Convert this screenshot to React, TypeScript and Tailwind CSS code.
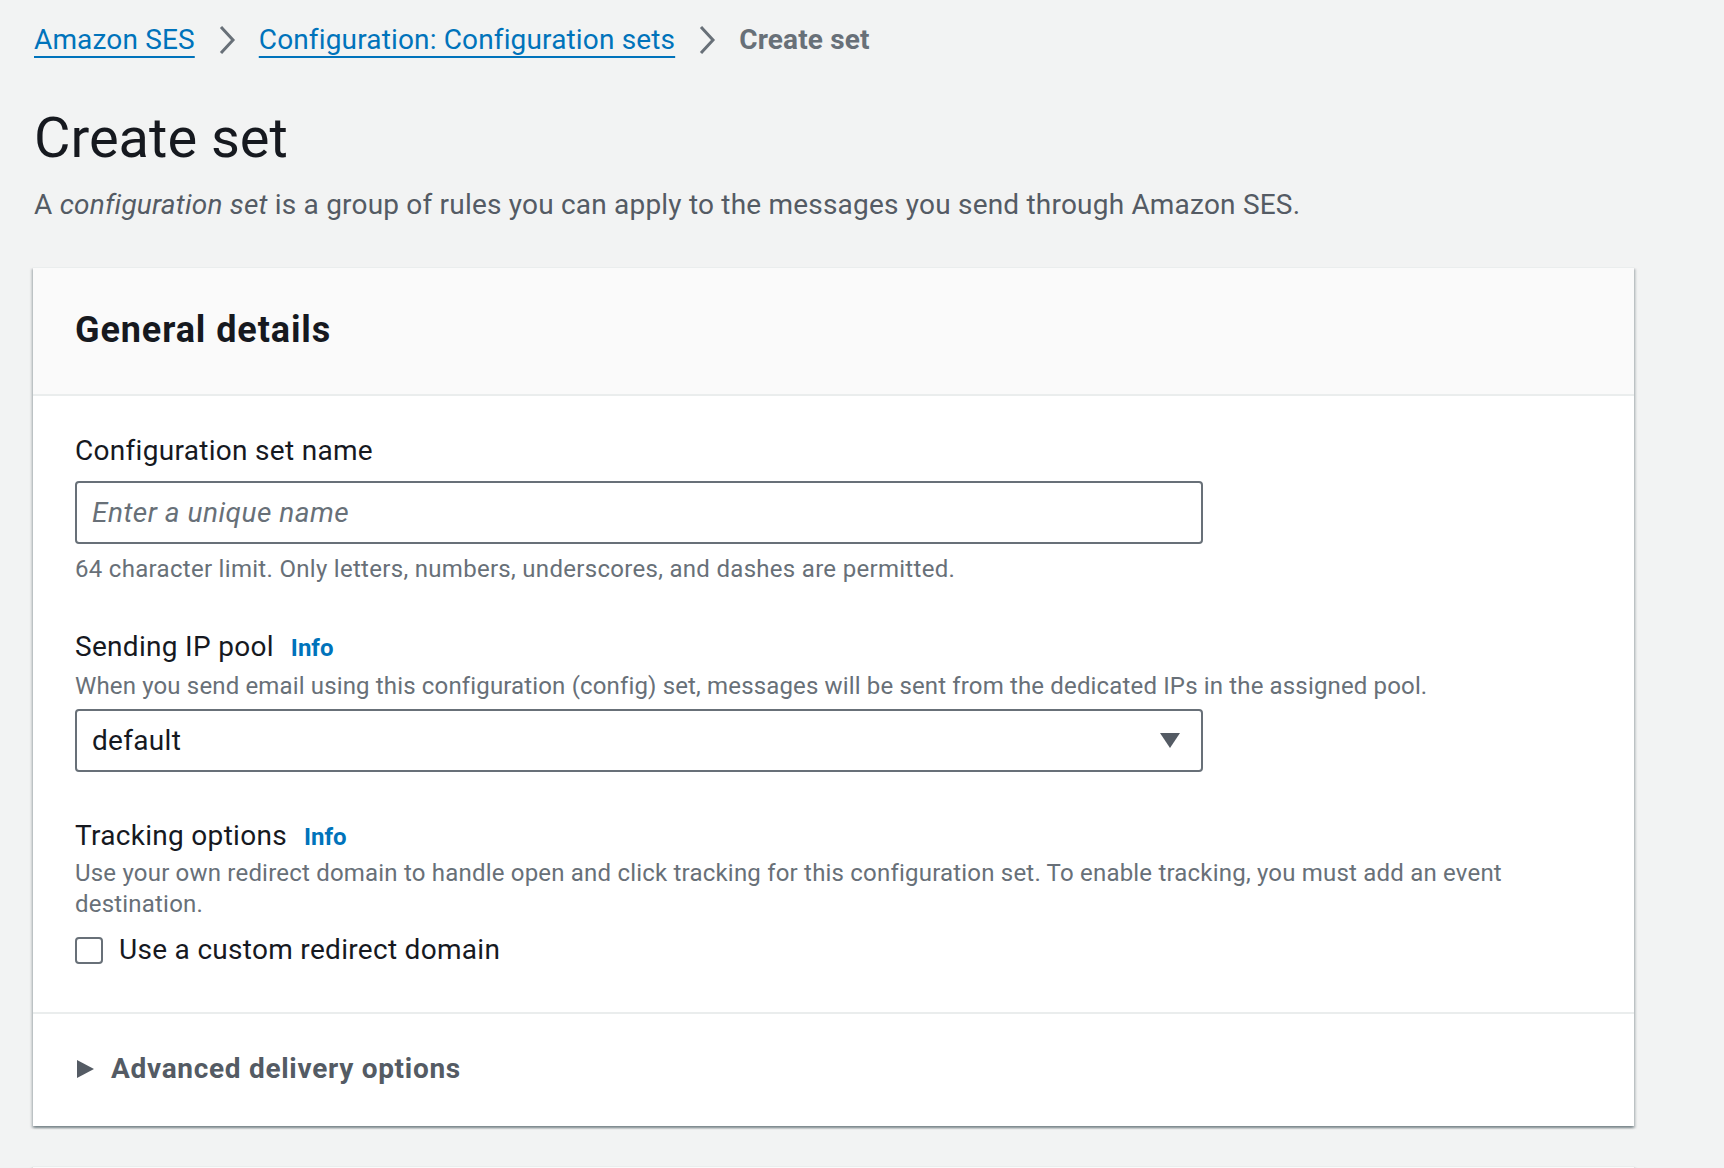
import React from "react";

function Chevron() {
  return (
    <svg className="mx-[23px] h-[32px] w-[18px] shrink-0 text-[#687078]" viewBox="0 0 18 32" fill="none">
      <path d="M3 3l12 13-12 13" stroke="currentColor" strokeWidth={3} strokeLinejoin="miter" />
    </svg>
  );
}

function InfoLink() {
  return <a className="ml-[17px] text-[24px] font-bold tracking-normal text-[#0073bb]">Info</a>;
}

export default function App() {
  return (
    <div className="min-h-screen bg-[#f2f3f3] font-['Roboto',sans-serif] text-[#16191f]">
      <div className="ml-[33px] w-[1601px] pt-[20px]">
        {/* Breadcrumbs */}
        <nav className="flex items-center pl-[1px] text-[28px] leading-[40px] tracking-[0.15px]">
          <a className="text-[#0073bb] underline decoration-2 underline-offset-[7px]">Amazon SES</a>
          <Chevron />
          <a className="text-[#0073bb] underline decoration-2 underline-offset-[7px]">
            Configuration: Configuration sets
          </a>
          <Chevron />
          <span className="font-bold text-[#687078]">Create set</span>
        </nav>

        {/* Page header */}
        <h1 className="mt-[46px] pl-[1px] text-[56px] font-normal leading-[64px]">Create set</h1>
        <p className="mt-[15px] pl-[1px] text-[28px] leading-[40px] tracking-[0.2px] text-[#545b64]">
          A <i>configuration set</i> is a group of rules you can apply to the messages you send through Amazon SES.
        </p>

        {/* General details card */}
        <section className="mt-[42px] border-t border-[#eaeded] bg-white shadow-[0_2px_2px_0_rgba(0,28,36,0.3),2px_2px_2px_0_rgba(0,28,36,0.15),-2px_2px_2px_0_rgba(0,28,36,0.15)]">
          <div className="border-b-2 border-[#eaeded] bg-[#fafafa] px-[42px] pb-[42px] pt-[40px]">
            <h2 className="text-[36px] font-bold leading-[44px] tracking-[0.9px]">General details</h2>
          </div>

          <div className="px-[42px] pb-[42px] pt-[35px]">
            {/* Name */}
            <label className="block text-[28px] leading-[40px] tracking-[0.3px]">Configuration set name</label>
            <div className="mt-[10px] flex h-[63px] w-[1128px] items-center rounded-[4px] border-2 border-[#687078] px-[15px]">
              <span className="text-[28px] italic tracking-[0.5px] text-[#687078]">Enter a unique name</span>
            </div>
            <p className="mt-[9px] text-[24px] leading-[32px] tracking-[0.3px] text-[#687078]">
              64 character limit. Only letters, numbers, underscores, and dashes are permitted.
            </p>

            {/* Sending IP pool */}
            <div className="mt-[42px] flex items-baseline text-[28px] leading-[40px] tracking-[0.3px]">
              Sending IP pool
              <InfoLink />
            </div>
            <p className="mt-[2px] text-[24px] leading-[32px] tracking-[0.15px] text-[#687078]">
              When you send email using this configuration (config) set, messages will be sent from the dedicated IPs in the assigned pool.
            </p>
            <div className="mt-[7px] flex h-[63px] w-[1128px] items-center justify-between rounded-[4px] border-2 border-[#687078] pl-[15px] pr-[21px]">
              <span className="text-[28px] tracking-[0.3px]">default</span>
              <svg className="h-[15px] w-[20px] text-[#545b64]" viewBox="0 0 20 15">
                <path d="M0 0h20L10 15z" fill="currentColor" />
              </svg>
            </div>

            {/* Tracking options */}
            <div className="mt-[44px] flex items-baseline text-[28px] leading-[40px] tracking-[0.3px]">
              Tracking options
              <InfoLink />
            </div>
            <p className="mt-[1px] text-[24px] leading-[31px] tracking-[0.2px] text-[#687078]">
              Use your own redirect domain to handle open and click tracking for this configuration set. To enable tracking, you must add an event destination.
            </p>
            <label className="mt-[10px] flex items-center text-[28px] leading-[40px] tracking-[0.3px]">
              <span className="mr-[16px] h-[27px] w-[28px] shrink-0 rounded-[4px] border-2 border-[#687078] bg-white" />
              Use a custom redirect domain
            </label>
          </div>

          {/* Advanced delivery options */}
          <div className="flex items-center border-t-2 border-[#eaeded] px-[44px] pb-[37px] pt-[35px]">
            <svg className="mr-[17px] h-[18px] w-[17px] text-[#545b64]" viewBox="0 0 17 18">
              <path d="M0 0l17 9L0 18z" fill="currentColor" />
            </svg>
            <span className="text-[28px] font-bold leading-[40px] tracking-[0.7px] text-[#545b64]">
              Advanced delivery options
            </span>
          </div>
        </section>

        {/* Next card, only its top edge shows */}
        <section className="mt-[40px] h-[128px] border-t border-[#eaeded] bg-[#fafafa] shadow-[0_2px_2px_0_rgba(0,28,36,0.3),2px_2px_2px_0_rgba(0,28,36,0.15),-2px_2px_2px_0_rgba(0,28,36,0.15)]" />
      </div>
    </div>
  );
}
